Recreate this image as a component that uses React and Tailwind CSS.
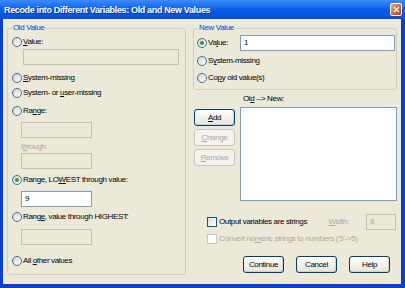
import React from 'react';

const FONT = "font-['Liberation_Sans',Arial,sans-serif]";

const Radio = ({ checked, children, className = '' }) => (
  <div className={`flex items-center h-[10px] ${className}`}>
    <svg width="10" height="10" viewBox="0 0 10 10" className="shrink-0">
      <defs>
        <linearGradient id="rg" x1="0" y1="0" x2="1" y2="1">
          <stop offset="0" stopColor="#d3d2ca" />
          <stop offset="1" stopColor="#ffffff" />
        </linearGradient>
      </defs>
      <circle cx="5" cy="5" r="4.5" fill="url(#rg)" stroke="#2f5f8f" strokeWidth="0.9" />
      {checked && <circle cx="5" cy="5" r="2.1" fill="#2aa02a" />}
    </svg>
    <span className="ml-[1px] whitespace-nowrap">{children}</span>
  </div>
);

const Check = ({ disabled, children, className = '' }) => (
  <div className={`flex items-center h-[10px] ${className}`}>
    <span
      className={`w-[10px] h-[10px] shrink-0 border ${
        disabled ? 'border-[#cac8bb] bg-white' : 'border-[#1c5180] bg-gradient-to-br from-[#dcdcd5] to-white'
      }`}
    />
    <span className={`ml-[2px] whitespace-nowrap ${disabled ? 'text-[#aca899]' : ''}`}>{children}</span>
  </div>
);

const Field = ({ value, disabled, className = '' }) => (
  <div
    className={`h-[16px] border px-[3px] flex items-center ${
      disabled ? 'border-[#c2c0b2] bg-[#ece9d8] text-[#aca899]' : 'border-[#7f9db9] bg-white'
    } ${className}`}
  >
    {value}
  </div>
);

const Btn = ({ disabled, children, className = '' }) => (
  <div
    className={`h-[17px] w-[41px] rounded-[3px] border flex items-center justify-center ${
      disabled
        ? 'border-[#c9c7ba] bg-[#f4f3ee] text-[#aca899]'
        : 'border-[#003c74] bg-gradient-to-b from-white to-[#e6e4da] shadow-[inset_-1px_-1px_0_#d6d0c5]'
    } ${className}`}
  >
    {children}
  </div>
);

const Group = ({ title, className = '', children }) => (
  <fieldset className={`border border-[#d0d0bf] rounded-[3px] ${className}`}>
    <legend className="ml-[4px] px-[1px] text-[#0046d5] leading-[10px]">{title}</legend>
    {children}
  </fieldset>
);

export default function App() {
  return (
    <div className={`w-[405px] h-[288px] flex flex-col bg-[#0a3fd0] ${FONT} text-[8px] leading-[10px] tracking-[-0.35px] text-black`}>
      {/* title bar */}
      <div className="h-[19px] shrink-0 flex items-center justify-between pl-[4px] pr-[3px] bg-gradient-to-b from-[#3b8cf8] via-[#0a5ee8] to-[#0a4fd8]">
        <span className="text-white font-bold text-[9px] leading-[12px] [text-shadow:1px_1px_0_#0a2a8a]">
          Recode into Different Variables: Old and New Values
        </span>
        <div className="w-[12px] h-[13px] rounded-[2px] border border-white bg-gradient-to-br from-[#f4a07c] via-[#e2643c] to-[#c43c14] flex items-center justify-center">
          <svg width="7" height="7" viewBox="0 0 7 7">
            <path d="M1 1L6 6M6 1L1 6" stroke="white" strokeWidth="1.4" />
          </svg>
        </div>
      </div>

      {/* body */}
      <div className="flex-1 ml-[3px] mr-[4px] mb-[4px] bg-[#ece9d8] flex pt-[4px] pl-[4px] gap-[7px]">
        <Group title="Old Value" className="w-[179px] h-[252px] flex flex-col">
          <Radio className="mt-[4px] ml-[4px]"><u>V</u>alue:</Radio>
          <Field disabled className="mt-[2px] ml-[15px] w-[156px]" />
          <Radio className="mt-[8px] ml-[4px]"><u>S</u>ystem-missing</Radio>
          <Radio className="mt-[5px] ml-[4px]">System- or <u>u</u>ser-missing</Radio>
          <Radio className="mt-[8px] ml-[4px]">Ra<u>n</u>ge:</Radio>
          <Field disabled className="mt-[6px] ml-[13px] w-[71px]" />
          <span className="mt-[4px] ml-[13px] text-[#aca899]">t<u>h</u>rough</span>
          <Field disabled className="mt-[1px] ml-[13px] w-[71px]" />
          <Radio checked className="mt-[6px] ml-[4px]">Range, LO<u>W</u>EST through value:</Radio>
          <Field value="9" className="mt-[6px] ml-[13px] w-[71px]" />
          <Radio className="mt-[5px] ml-[4px]">Rang<u>e</u>, value through HIGHEST:</Radio>
          <Field disabled className="mt-[7px] ml-[13px] w-[71px]" />
          <Radio className="mt-[11px] ml-[4px]">All <u>o</u>ther values</Radio>
        </Group>

        <div className="w-[204px] flex flex-col">
          <Group title="New Value" className="h-[67px] flex flex-col">
            <div className="mt-[2px] ml-[3px] h-[16px] flex items-center">
              <Radio checked>Va<u>l</u>ue:</Radio>
              <Field value="1" className="ml-auto mr-[1px] w-[155px]" />
            </div>
            <Radio className="mt-[5px] ml-[3px]">S<u>y</u>stem-missing</Radio>
            <Radio className="mt-[7px] ml-[3px]">Co<u>p</u>y old value(s)</Radio>
          </Group>

          <span className="mt-[4px] ml-[50px]">Ol<u>d</u> --&gt; New:</span>
          <div className="mt-[3px] flex">
            <div className="ml-[1px] mt-[2px] flex flex-col gap-[3px]">
              <Btn><u>A</u>dd</Btn>
              <Btn disabled><u>C</u>hange</Btn>
              <Btn disabled><u>R</u>emove</Btn>
            </div>
            <div className="ml-[5px] w-[157px] h-[94px] bg-white border border-[#7f9db9]" />
          </div>

          <div className="mt-[13px] h-[15px] flex items-center">
            <Check className="ml-[14px]">Output variables are strin<u>g</u>s</Check>
            <span className="ml-auto text-[#aca899]"><u>W</u>idth:</span>
            <Field disabled value="8" className="ml-[17px] mr-[1px] w-[30px] h-[15px]" />
          </div>
          <Check disabled className="mt-[5px] ml-[14px]">Convert nu<u>m</u>eric strings to numbers ('5'-&gt;5)</Check>

          <div className="mt-[12px] ml-[50px] flex gap-[12px]">
            <Btn>Continue</Btn>
            <Btn>Cancel</Btn>
            <Btn>Help</Btn>
          </div>
        </div>
      </div>
    </div>
  );
}
